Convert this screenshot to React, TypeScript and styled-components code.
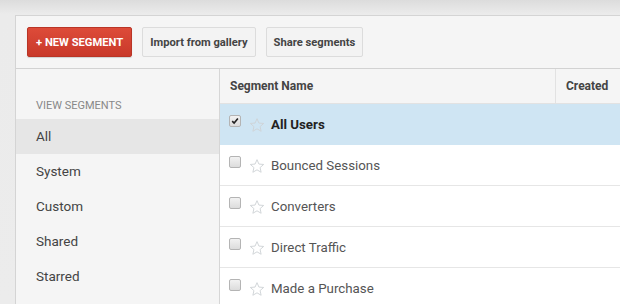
import React from 'react'
import styled, { createGlobalStyle } from 'styled-components'

const GlobalStyle = createGlobalStyle`
  html, body {
    margin: 0;
    padding: 0;
    background: linear-gradient(#dcdcdc 0px, #ebebeb 14px, #ececec 100%);
    font-family: Roboto, "Liberation Sans", Arial, sans-serif;
    overflow: hidden;
  }
`

const Page = styled.div`
  padding: 15px 0 0 15px;
  height: 304px;
  box-sizing: border-box;
  overflow: hidden;
`

const Panel = styled.div`
  width: 605px;
  border: 1px solid #d4d4d4;
  border-right: none;
  background: #f5f5f5;
  box-sizing: border-box;
`

const Toolbar = styled.div`
  display: flex;
  align-items: center;
  gap: 10px;
  height: 52px;
  padding: 0 11px;
  border-bottom: 1px solid #d2d2d2;
`

const Button = styled.button<{ $primary?: boolean }>`
  height: 30px;
  margin: 0;
  padding: 0 ${p => (p.$primary ? '8px' : '7px')};
  font-family: Roboto, "Liberation Sans", Arial, sans-serif;
  font-size: 11.2px;
  font-weight: 700;
  border-radius: 2px;
  cursor: pointer;
  color: ${p => (p.$primary ? '#fff' : '#444')};
  background: ${p => (p.$primary ? 'linear-gradient(#dd4b39, #c9392a)' : '#f3f3f3')};
  border: 1px solid ${p => (p.$primary ? '#b93526' : '#dcdcdc')};
  box-shadow: ${p => (p.$primary ? '0 1px 1px rgba(0,0,0,0.15)' : 'none')};
`

const Body = styled.div`
  display: grid;
  grid-template-columns: 204px 1fr;
  height: 236px;
`

const Sidebar = styled.div`
  border-right: 1px solid #d6d6d6;
  padding-top: 29px;
`

const SideTitle = styled.div`
  font-size: 11px;
  color: #888;
  padding-left: 20px;
  height: 16px;
  line-height: 16px;
  margin-bottom: 5px;
`

const SideItem = styled.div<{ $active?: boolean }>`
  height: 35px;
  line-height: 35px;
  padding-left: 20px;
  font-size: 13.5px;
  color: #444;
  background: ${p => (p.$active ? '#e6e6e6' : 'transparent')};
`

const Table = styled.div`
  background: #fff;
`

const HeadRow = styled.div`
  display: grid;
  grid-template-columns: 336px 1fr;
  height: 34px;
  background: #f5f5f5;
  border-bottom: 1px solid #e2e2e2;
`

const HeadCell = styled.div<{ $divider?: boolean }>`
  display: flex;
  align-items: center;
  padding-left: 10px;
  font-size: 12px;
  font-weight: 700;
  color: #444;
  border-right: ${p => (p.$divider ? '1px solid #e2e2e2' : 'none')};
`

const Row = styled.div<{ $selected?: boolean }>`
  display: flex;
  align-items: center;
  height: 41px;
  padding-left: 9px;
  padding-top: 1px;
  box-sizing: border-box;
  border-bottom: 1px solid ${p => (p.$selected ? '#cfe5f3' : '#e6e6e6')};
  background: ${p => (p.$selected ? '#cfe5f3' : '#fff')};
`

const Check = styled.span<{ $checked?: boolean }>`
  width: 12px;
  height: 12px;
  box-sizing: border-box;
  border: 1px solid #b4b4b4;
  border-radius: 2px;
  background: linear-gradient(#f2f2f2, #dcdcdc);
  margin-top: -7px;
  display: flex;
  align-items: center;
  justify-content: center;
`

const StarIcon = styled.svg`
  margin-left: 8px;
  flex: none;
`

const Name = styled.span<{ $bold?: boolean }>`
  margin-left: 6px;
  font-size: 13.3px;
  font-weight: ${p => (p.$bold ? 700 : 400)};
  color: ${p => (p.$bold ? '#222' : '#555')};
`

const Star = () => (
  <StarIcon width="16" height="16" viewBox="0 0 24 24">
    <path
      d="M12 2.5l2.9 6.6 7.1.6-5.4 4.7 1.6 7-6.2-3.7-6.2 3.7 1.6-7L2 9.7l7.1-.6z"
      fill="none"
      stroke="#cfd3d6"
      strokeWidth="1.4"
      strokeLinejoin="round"
    />
  </StarIcon>
)

const segments = [
  { name: 'All Users', selected: true },
  { name: 'Bounced Sessions' },
  { name: 'Converters' },
  { name: 'Direct Traffic' },
  { name: 'Made a Purchase' }
]

const views = ['All', 'System', 'Custom', 'Shared', 'Starred']

export default function App() {
  return (
    <Page>
      <GlobalStyle />
      <Panel>
        <Toolbar>
          <Button $primary>+ NEW SEGMENT</Button>
          <Button>Import from gallery</Button>
          <Button>Share segments</Button>
        </Toolbar>
        <Body>
          <Sidebar>
            <SideTitle>VIEW SEGMENTS</SideTitle>
            {views.map((v, i) => (
              <SideItem key={v} $active={i === 0}>
                {v}
              </SideItem>
            ))}
          </Sidebar>
          <Table>
            <HeadRow>
              <HeadCell $divider>Segment Name</HeadCell>
              <HeadCell>Created</HeadCell>
            </HeadRow>
            {segments.map(s => (
              <Row key={s.name} $selected={s.selected}>
                <Check $checked={s.selected}>
                  {s.selected && (
                    <svg width="8" height="8" viewBox="0 0 10 10">
                      <path d="M1.5 5.2l2.4 2.4L8.6 2" fill="none" stroke="#222" strokeWidth="2" />
                    </svg>
                  )}
                </Check>
                <Star />
                <Name $bold={s.selected}>{s.name}</Name>
              </Row>
            ))}
          </Table>
        </Body>
      </Panel>
    </Page>
  )
}
